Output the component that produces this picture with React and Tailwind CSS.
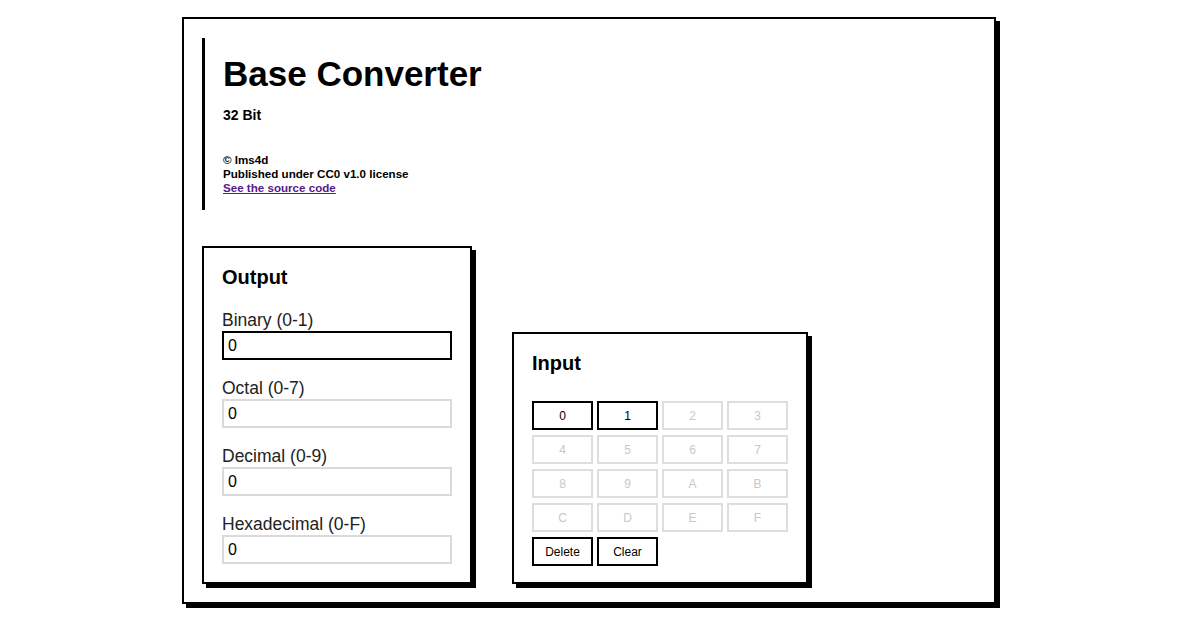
const digits = ['0', '1', '2', '3', '4', '5', '6', '7', '8', '9', 'A', 'B', 'C', 'D', 'E', 'F'];

const fields = [
  { label: 'Binary (0-1)', active: true },
  { label: 'Octal (0-7)' },
  { label: 'Decimal (0-9)' },
  { label: 'Hexadecimal (0-F)' },
];

function Field({ label, active }) {
  return (
    <label className="block">
      <span className="block text-[17.5px] leading-[18px] text-[#222]">{label}</span>
      <input
        readOnly
        value="0"
        className={`mt-[2px] block w-[230px] h-[29px] px-[4px] text-[16px] text-black outline-none border-2 ${
          active ? 'border-black' : 'border-[#dadada]'
        }`}
      />
    </label>
  );
}

function Key({ children, enabled }) {
  return (
    <button
      disabled={!enabled}
      className={`h-[29px] border-2 bg-white text-[12px] ${
        enabled ? 'border-black text-black' : 'border-[#dedede] text-[#c8c8c8]'
      }`}
    >
      {children}
    </button>
  );
}

export default function App() {
  return (
    <div className="min-h-[630px] bg-white pt-[17px] font-['Liberation_Sans',Arial,sans-serif] text-black">
      <main className="mx-auto w-[814px] border-2 border-black shadow-[4px_4px_0_#000] pt-[19px] px-[18px] pb-[18px]">
        <header className="border-l-[3px] border-black pl-[18px] pt-[17px] pb-[15px]">
          <h1 className="text-[35px] leading-[37px] font-bold">Base Converter</h1>
          <p className="mt-[15px] text-[14px] leading-[16px] font-bold">32 Bit</p>
          <div className="mt-[30px] text-[11.6px] leading-[14px] font-bold">
            <p>© lms4d</p>
            <p>Published under CC0 v1.0 license</p>
            <a href="#" className="text-[#551a8b] underline">See the source code</a>
          </div>
        </header>

        <div className="mt-[36px] flex items-end gap-[40px]">
          <section className="w-[270px] border-2 border-black shadow-[4px_4px_0_#000] px-[18px] pt-[18px] pb-[18px]">
            <h2 className="text-[20px] leading-[23px] font-bold">Output</h2>
            <div className="mt-[22px] flex flex-col gap-[19px]">
              {fields.map((f) => (
                <Field key={f.label} {...f} />
              ))}
            </div>
          </section>

          <section className="w-[296px] border-2 border-black shadow-[4px_4px_0_#000] px-[18px] pt-[18px] pb-[16px]">
            <h2 className="text-[20px] leading-[23px] font-bold">Input</h2>
            <div className="mt-[26px] grid grid-cols-[repeat(4,61px)] gap-x-[4px] gap-y-[5px]">
              {digits.map((d) => (
                <Key key={d} enabled={d === '0' || d === '1'}>{d}</Key>
              ))}
              <Key enabled>Delete</Key>
              <Key enabled>Clear</Key>
            </div>
          </section>
        </div>
      </main>
    </div>
  );
}
